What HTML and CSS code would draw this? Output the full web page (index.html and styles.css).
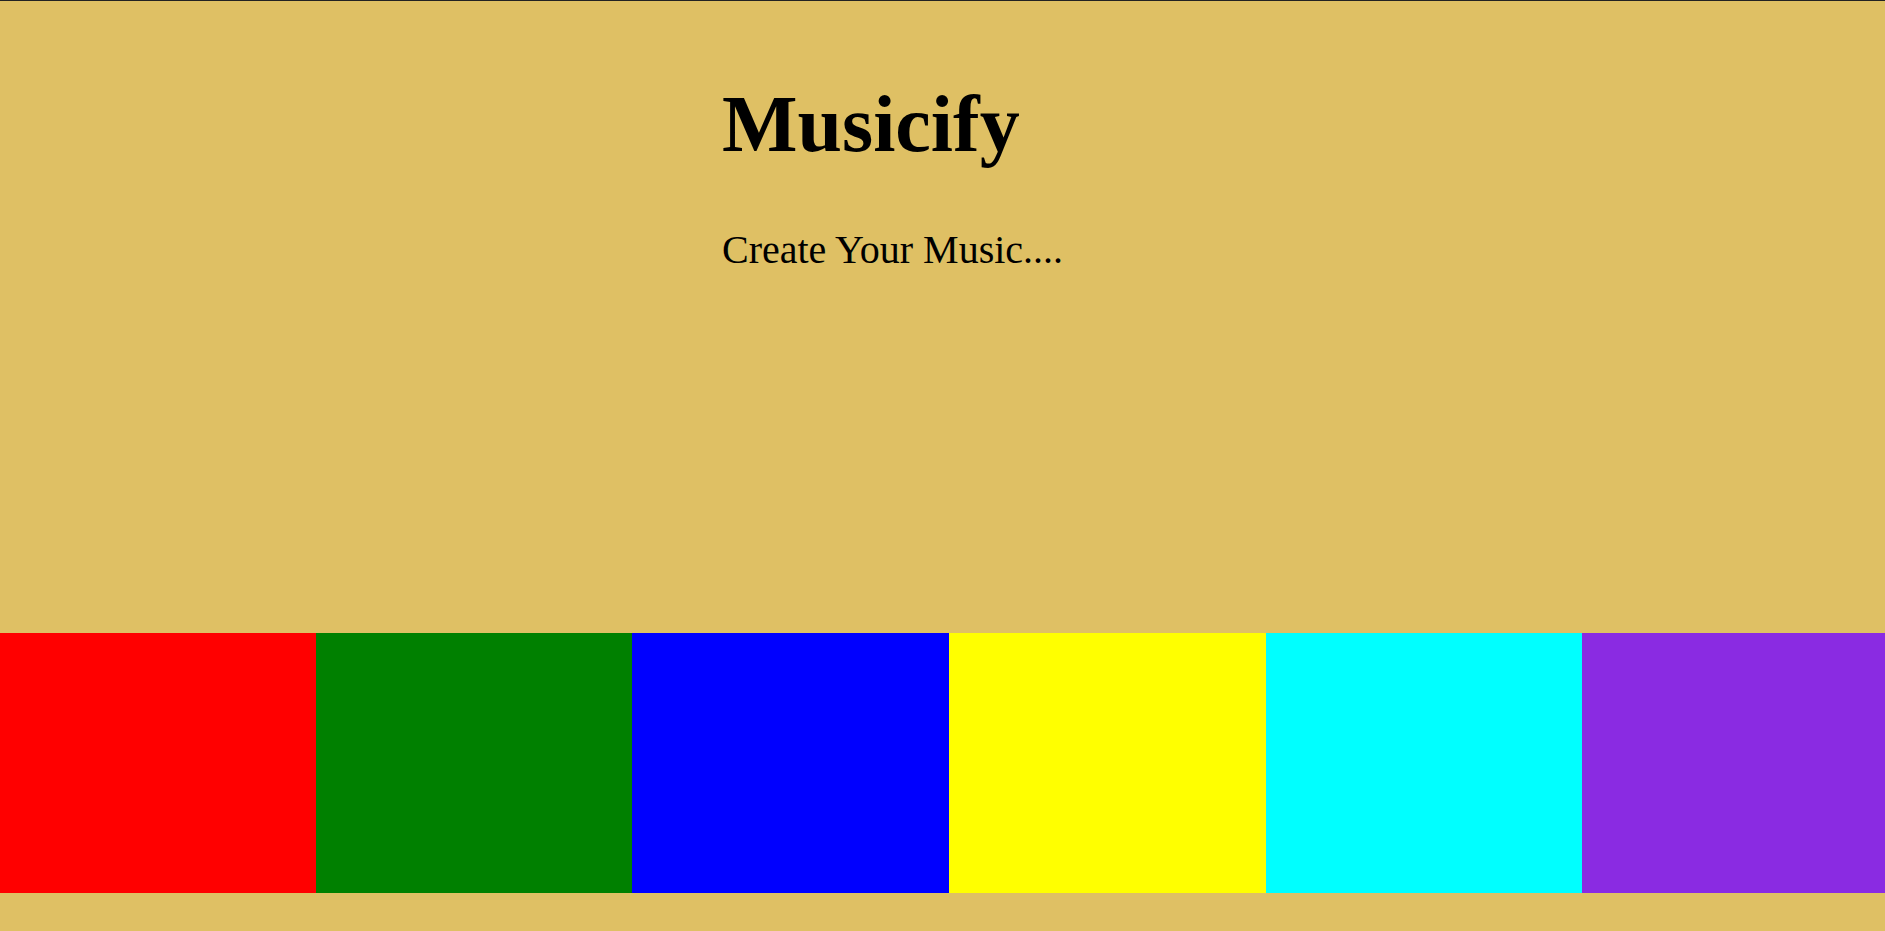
FILE: index.html
```html
<!DOCTYPE html>
<html>
<head>
<meta charset="utf-8">
<title>Musicify</title>
<link rel="stylesheet" href="styles.css">
</head>
<body>
<header class="hero">
  <h1 class="title">Musicify</h1>
  <p class="tagline">Create Your Music....</p>
</header>
<section class="pads">
  <div class="pad red"></div>
  <div class="pad green"></div>
  <div class="pad blue"></div>
  <div class="pad yellow"></div>
  <div class="pad cyan"></div>
  <div class="pad purple"></div>
</section>
</body>
</html>
```
FILE: styles.css
```css
html, body {
  margin: 0;
  padding: 0;
}
body {
  background: #dfc064;
  border-top: 1px solid #222;
  font-family: "Liberation Serif", "Times New Roman", serif;
  color: #000;
  height: 930px;
  overflow: hidden;
}
.hero {
  height: 632px;
  padding-left: 722px;
  box-sizing: border-box;
  padding-top: 1px;
}
.title {
  margin: 0;
  margin-top: 77px;
  font-size: 80px;
  line-height: 90px;
  font-weight: bold;
}
.tagline {
  margin: 0;
  margin-top: 58px;
  font-size: 40px;
  line-height: 46px;
}
.pads {
  display: grid;
  grid-template-columns: 316px 316px 317px 317px 316px 1fr;
  height: 260px;
}
.red { background: #ff0000; }
.green { background: #008000; }
.blue { background: #0000ff; }
.yellow { background: #ffff00; }
.cyan { background: #00ffff; }
.purple { background: #8a2be2; }
```
